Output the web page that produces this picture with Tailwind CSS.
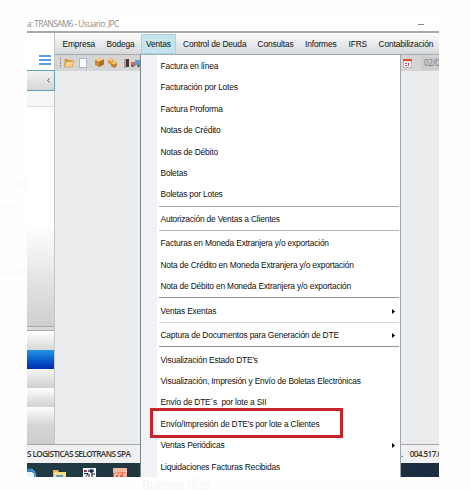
<!DOCTYPE html>
<html lang="es">
<head>
<meta charset="utf-8">
<title>TRANSAM6</title>
<script src="https://cdn.jsdelivr.net/npm/@tailwindcss/browser@4"></script>
</head>
<body class="relative h-[490px] w-[470px] overflow-hidden bg-[#fefefe] pt-[17px] pl-[27px] font-['Liberation_Sans',Arial,sans-serif] text-[8.4px] text-[#101010]">
<!-- faded conversation behind the window -->
<div class="font-['Open_Sans',sans-serif] text-[12px] leading-4 whitespace-nowrap text-[#f9f9f9]">
  <span class="absolute top-[177px] left-[16px]">ile</span>
  <span class="absolute top-[198px] left-0">e en p</span>
  <span class="absolute top-[243px] left-[9px] text-[10px]">12n</span>
  <span class="absolute top-[264px] left-0">salad</span>
  <span class="absolute top-[307px] left-[9px] text-[10px]">120</span>
  <span class="absolute top-[372px] left-[11px] text-[10px]">115</span>
  <span class="absolute top-[437px] left-[11px] text-[10px]">120</span>
  <span class="absolute top-[477px] left-[142px] leading-[16px] text-[#f4f4f4]">Buenos días</span>
</div>

<main class="relative flex h-[460px] w-[412px] flex-col overflow-hidden bg-white whitespace-nowrap">
  <header class="flex h-[14px] shrink-0 items-center justify-between pr-[15px] font-['Open_Sans',sans-serif] text-[8.2px] text-[#8c8c8c]">
    <span class="tracking-[-0.5px]">a: TRANSAM6 - Usuario: JPC</span>
    <span class="h-px w-[6px] bg-[#888]"></span>
  </header>
  <div class="h-[2px] shrink-0 bg-[#a9a9a9]"></div>

  <div class="flex min-h-0 flex-1">
    <aside class="flex w-[28px] shrink-0 flex-col border-r border-[#c4c6c8]">
      <div class="flex h-[37px] items-end justify-end pr-[3px] pb-[5px]">
        <svg class="h-[11px] w-[12px]" viewBox="0 0 12 11" fill="#5b9fdf"><path d="M0 1h12v2H0zM0 5h12v2H0zM0 9h12v2H0z"/></svg>
      </div>
      <div class="-mr-px flex h-[21px] items-center justify-end border-y border-r border-[#639fb6] bg-linear-to-b from-[#f2f2f2] to-[#d6d6d6] pr-[4px]">
        <svg class="h-[5px] w-[3px]" viewBox="0 0 3 5" fill="none" stroke="#444" stroke-width=".8"><path d="M2.6.3.6 2.5l2 2.2"/></svg>
      </div>
      <div class="h-[16px] border-b border-[#dedede] bg-[#f6f6f6]"></div>
      <div class="h-[117px]"></div>
      <div class="h-[102px] bg-linear-to-b from-white via-[#dadada] via-75% to-[#cfcfcf]"></div>
      <div class="h-[5px] border-y border-[#a9a9a9] bg-[#d9d9d9]"></div>
      <div class="h-[19px] bg-linear-to-b from-white to-[#d8d8d8]"></div>
      <div class="h-[19px] bg-linear-to-b from-[#2597e2] via-[#0c5ecb] to-[#0429ad]"></div>
      <div class="h-[19px] bg-linear-to-b from-[#f5f5f5] to-[#cfcfcf]"></div>
      <div class="h-[19px] bg-linear-to-b from-white to-[#d0d0d0]"></div>
      <div class="h-[19px] bg-linear-to-b from-white to-[#d4d4d4]"></div>
      <div class="flex-1 bg-linear-to-b from-[#d6d6d6] to-[#cbcbcb]"></div>
    </aside>

    <section class="flex min-w-0 flex-1 flex-col bg-[#ebecee]">
      <nav class="flex h-[22px] shrink-0 items-stretch border-b border-[#a6abb0] bg-linear-to-b from-[#fdfdfd] to-[#d5d8da] pt-px leading-[20px] tracking-[-0.14px]">
        <span class="w-[44px] pl-[7.500px]">Empresa</span>
        <span class="w-[42px] pl-[7.500px]">Bodega</span>
        <span class="w-[35px] border border-[#a6d3df] bg-[#c5e3ea] pl-[4px] leading-[18px]">Ventas</span>
        <span class="w-[75px] pl-[7px]">Control de Deuda</span>
        <span class="w-[48px] pl-[6.500px]">Consultas</span>
        <span class="w-[43px] pl-[6px]">Informes</span>
        <span class="w-[31px] pl-[6.500px]">IFRS</span>
        <span class="pl-[5.500px]">Contabilización</span>
      </nav>
      <div class="flex h-[16px] shrink-0 items-center bg-[#d5d5d6] pl-[5px]">
        <svg class="h-[16px] w-[82px] shrink-0" viewBox="0 0 82 16">
          <path d="M.5 3v10" stroke="#666" stroke-dasharray="1 1.4"/>
          <path d="M4.500 4h3l1 1h4v7h-8z" fill="#d29a43"/>
          <path d="M6 6.500h8l-2 5.500H4.500z" fill="#f8d486" stroke="#bd8532" stroke-width=".5"/>
          <path d="M19.500 3.500h7v9h-7z" fill="#fcfdff" stroke="#95abcf" stroke-width=".8"/>
          <path d="m35 5 5-2 4 1.500v5L39 12l-4-2z" fill="#c98a30"/>
          <path d="m35 5 5-2 4 1.500-5 2z" fill="#f6d68e"/><path d="m39 6.500 5-2v5L39 12z" fill="#b3711f"/>
          <path d="m48 5 3-2 3 2v3l-3 2-3-2z" fill="#dc9b38"/><path d="m51 8 3-2 3 2v3l-3 2-3-2z" fill="#bd8030"/>
          <path d="m48 5 3-2 3 2-3 1.500zM51 8l3-2 3 2-3 1.500z" fill="#f4c66e"/>
          <path d="M65 4v9" stroke="#766f68"/><path d="M66 4h3v8h-3z" fill="#4b3528"/>
          <path d="M71 7h5v4h-5z" fill="#d3705f"/><path d="M75 5h7v5h-7z" fill="#5c9aca"/>
          <circle cx="72.500" cy="11" r="1.200" fill="#555"/><circle cx="78.500" cy="11" r="1.200" fill="#38546b"/>
        </svg>
        <div class="ml-auto flex h-full w-[38px] shrink-0 items-center">
          <svg class="ml-[2px] h-[9px] w-[9px]" viewBox="0 0 9 9"><path d="M.500.500h8v8h-8z" fill="#f3f5fa" stroke="#9ca8bf" stroke-width=".7"/><path d="M0 0h9v2.200H0z" fill="#d94f3c"/><path d="M2 4h2v1H2zm0 2h2v1H2zm3-2h1v3H5z" fill="#c34b4a"/></svg>
          <span class="ml-[9px] flex h-[13px] w-[18px] items-center bg-[#cbcbcc] pl-[3px] font-['Open_Sans',sans-serif] text-[8.2px] tracking-[-0.4px] text-[#7a7a7a]">02/0</span>
        </div>
      </div>
      <div class="flex-1"></div>
    </section>
  </div>

  <footer class="flex h-[19px] shrink-0 items-center border-t border-[#a4a7aa] bg-[#f0f0f1] font-['Open_Sans',sans-serif] text-[8.200px] font-semibold text-[#333]">
    <span class="tracking-[-0.57px]">S LOGISTICAS SELOTRANS SPA</span>
    <span class="ml-auto flex w-[38px] shrink-0 gap-[7px] tracking-[-0.6px]"><span>.</span><span>004.517.0</span></span>
  </footer>
  <div class="flex h-[14px] shrink-0 bg-linear-to-r from-[#223b43] to-[#1c2c40]">
    <svg class="h-[14px] w-[113px]" viewBox="0 0 113 14">
      <circle cx="2" cy="13" r="7.500" fill="#3382c9"/><path d="M-2 9h7l2 2v3h-9z" fill="#e8f2f9"/><path d="M4 6q5 2 4 8" fill="none" stroke="#69b7eb"/>
      <path d="M26 7h5l1 2h7v5H26z" fill="#e8b84f"/><path d="M27 9h12v5H27z" fill="#fadc83"/><path d="M29 12h7v2h-7z" fill="#5f9dc5"/>
      <path d="M56 5h13v9H56z" fill="#f4f4f6"/><path d="M57 7h3v2h-3z" fill="#a33945"/><path d="M61 8h6" stroke="#26345e" stroke-width="1.500"/><circle cx="64.500" cy="8" r="2" fill="#26345e"/><path d="M57 10.500h4l-2 3M62 11v3M64 11h4M65 11v3" stroke="#222" fill="none"/>
      <path d="M86 5h14v9H86z" fill="#e65c42"/><path d="M86 5h14v4l-14 1z" fill="#f4b6a2"/><path d="M91 11h-3v3M95 11h-3v3M97 10v4M99 8v6" stroke="#fff" fill="none"/>
    </svg>
  </div>

  <!-- open "Ventas" menu -->
  <div class="absolute top-[37px] left-[113px] flex h-[423px] w-[261px] border-t border-r border-l border-t-[#a4aeb4] border-r-[#a0a5ab] border-l-[#7c8289] bg-white">
    <div class="w-[16px] shrink-0 bg-[#f1f2f5]"></div>
    <ul class="flex flex-1 flex-col pr-px pl-[2px] leading-[23px] tracking-[-0.18px] *:shrink-0 [&>li]:h-[21.4px] [&>li]:pl-[1.500px] [&>li]:whitespace-pre">
      <li>Factura en línea</li>
      <li>Facturación por Lotes</li>
      <li>Factura Proforma</li>
      <li>Notas de Crédito</li>
      <li>Notas de Débito</li>
      <li>Boletas</li>
      <li>Boletas por Lotes</li>
      <hr class="mt-px mb-[1.100px] border-[#a9a9a9]">
      <li>Autorización de Ventas a Clientes</li>
      <hr class="mt-px mb-[1.100px] border-[#b9b9b9]">
      <li>Facturas en Moneda Extranjera y/o exportación</li>
      <li>Nota de Crédito en Moneda Extranjera y/o exportación</li>
      <li>Nota de Débito en Moneda Extranjera y/o exportación</li>
      <hr class="mt-px mb-[1.100px] border-[#969696]">
      <li class="flex items-center justify-between pt-[1.500px] pr-[4px]">Ventas Exentas<svg class="h-[5px] w-[3px]" viewBox="0 0 3 5"><path d="M0 0l3 2.500L0 5z"/></svg></li>
      <hr class="mt-px mb-[1.100px] border-[#d6d6d6]">
      <li class="flex items-center justify-between pt-[1.500px] pr-[4px]">Captura de Documentos para Generación de DTE<svg class="h-[5px] w-[3px]" viewBox="0 0 3 5"><path d="M0 0l3 2.500L0 5z"/></svg></li>
      <hr class="mt-px mb-[1.100px] border-[#969696]">
      <li>Visualización Estado DTE's</li>
      <li>Visualización, Impresión y Envío de Boletas Electrónicas</li>
      <li>Envío de DTE´s  por lote a SII</li>
      <li>Envío/Impresión de DTE's por lote a Clientes</li>
      <li class="flex items-center justify-between pt-[1.500px] pr-[4px]">Ventas Periódicas<svg class="h-[5px] w-[3px]" viewBox="0 0 3 5"><path d="M0 0l3 2.500L0 5z"/></svg></li>
      <li>Liquidaciones Facturas Recibidas</li>
    </ul>
  </div>
  <div class="absolute top-[391px] left-[123px] h-[30px] w-[193px] border-3 border-[#c8232c]"></div>
</main>
</body>
</html>
